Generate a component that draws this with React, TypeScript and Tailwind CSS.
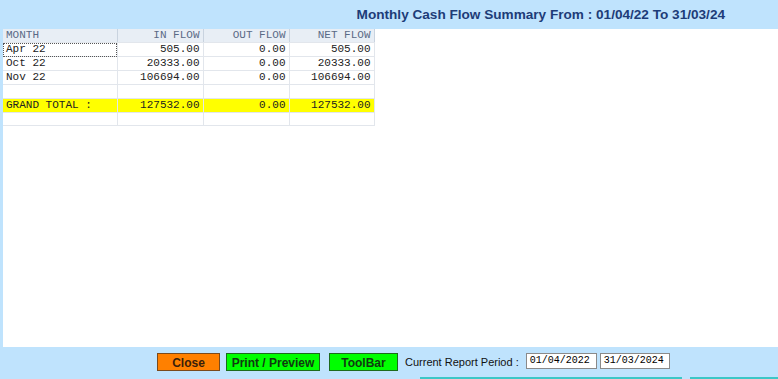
import React from 'react';

const ROWS = [
  { month: 'Apr 22', inflow: '505.00', outflow: '0.00', net: '505.00', focus: true },
  { month: 'Oct 22', inflow: '20333.00', outflow: '0.00', net: '20333.00' },
  { month: 'Nov 22', inflow: '106694.00', outflow: '0.00', net: '106694.00' },
];

const cell = 'h-[13.5px] border-r border-b border-[#e2e6ec] px-[3px] leading-[13px] whitespace-nowrap';

const App: React.FC = () => {
  return (
    <div className="w-[778px] h-[379px] bg-[#bfe3fd] flex flex-col overflow-hidden font-['Liberation_Sans',Arial,sans-serif]">
      {/* Title */}
      <div className="h-[29px] flex items-center justify-end pr-[53px] pt-[1px]">
        <span className="text-[13.6px] font-bold text-[#1d3c78]">
          Monthly Cash Flow Summary From : 01/04/22 To 31/03/24
        </span>
      </div>

      {/* Report area */}
      <div className="flex-1 ml-[3px] bg-white">
        <table className="border-collapse text-[11px] font-['Liberation_Mono','Courier_New',monospace] text-[#222]">
          <colgroup>
            <col className="w-[114px]" />
            <col className="w-[86px]" />
            <col className="w-[86px]" />
            <col className="w-[85px]" />
          </colgroup>
          <thead>
            <tr className="bg-[#e8eef5] text-[#5a6a86]">
              <th className={`${cell} text-left font-normal border-r-[#c9d3df]`}>MONTH</th>
              <th className={`${cell} text-right font-normal border-r-[#c9d3df]`}>IN FLOW</th>
              <th className={`${cell} text-right font-normal border-r-[#c9d3df]`}>OUT FLOW</th>
              <th className={`${cell} text-right font-normal border-r-[#c9d3df]`}>NET FLOW</th>
            </tr>
          </thead>
          <tbody>
            {ROWS.map((r) => (
              <tr key={r.month}>
                <td className={`${cell} ${r.focus ? 'outline outline-1 outline-dotted outline-[#555] -outline-offset-1' : ''}`}>{r.month}</td>
                <td className={`${cell} text-right`}>{r.inflow}</td>
                <td className={`${cell} text-right`}>{r.outflow}</td>
                <td className={`${cell} text-right`}>{r.net}</td>
              </tr>
            ))}
            <tr>
              <td className={cell}></td>
              <td className={cell}></td>
              <td className={cell}></td>
              <td className={cell}></td>
            </tr>
            <tr className="bg-[#ffff00]">
              <td className={cell}>GRAND TOTAL :</td>
              <td className={`${cell} text-right`}>127532.00</td>
              <td className={`${cell} text-right`}>0.00</td>
              <td className={`${cell} text-right`}>127532.00</td>
            </tr>
            <tr>
              <td className={cell}></td>
              <td className={cell}></td>
              <td className={cell}></td>
              <td className={cell}></td>
            </tr>
          </tbody>
        </table>
      </div>

      {/* Bottom bar */}
      <div className="h-[32px] relative flex items-start pt-[6px] pl-[157px] text-[11px]">
        <button className="w-[63px] h-[18px] bg-[#ff8000] border border-[#7a4a1c] font-bold text-[12px] text-[#3a1f0a]">Close</button>
        <button className="ml-[6px] w-[94px] h-[18px] bg-[#00ff00] border border-[#1d6b1d] font-bold text-[12px] text-[#103a10]">Print / Preview</button>
        <button className="ml-[9px] w-[69px] h-[18px] bg-[#00ff00] border border-[#1d6b1d] font-bold text-[12px] text-[#103a10]">ToolBar</button>
        <span className="ml-[7px] mt-[1px] text-[#111]">Current Report Period :</span>
        <div className="ml-[7px] w-[71px] h-[16px] bg-white border border-[#8a8a8a] text-[10px] leading-[14px] pl-[3px] font-['Liberation_Mono','Courier_New',monospace]">01/04/2022</div>
        <div className="ml-[3px] w-[70px] h-[16px] bg-white border border-[#8a8a8a] text-[10px] leading-[14px] pl-[3px] font-['Liberation_Mono','Courier_New',monospace]">31/03/2024</div>
        <div className="absolute bottom-0 left-[420px] w-[262px] h-[2px] bg-[#3cc7c7]" />
        <div className="absolute bottom-0 left-[690px] right-0 h-[2px] bg-[#3cc7c7]" />
      </div>
    </div>
  );
};

export default App;
